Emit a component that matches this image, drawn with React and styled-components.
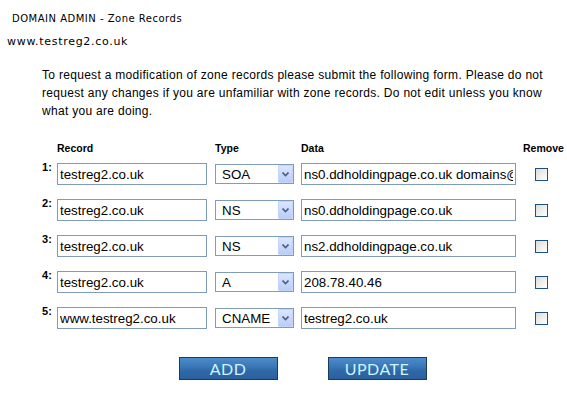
import React from "react";
import styled, { createGlobalStyle } from "styled-components";

const GlobalStyle = createGlobalStyle`
  body {
    margin: 0;
    background: #ffffff;
    color: #000000;
    font-family: "DejaVu Sans", Verdana, sans-serif;
  }
`;

const Page = styled.div`
  width: 567px;
  height: 414px;
  overflow: hidden;
`;

const Title = styled.div`
  padding: 12px 0 0 12px;
  font-size: 10px;
  line-height: 14px;
  letter-spacing: 0.5px;
`;

const Domain = styled.div`
  margin-top: 9px;
  padding-left: 7px;
  font-size: 11px;
  line-height: 14px;
  letter-spacing: 0.7px;
`;

const Intro = styled.p`
  margin: 17px 0 0 42px;
  width: 506px;
  font-family: "Liberation Sans", Arial, sans-serif;
  font-size: 12px;
  line-height: 18px;
  letter-spacing: 0.3px;
`;

const Form = styled.form`
  margin: 22px 0 0 42px;
  width: 521px;
  font-family: "Liberation Sans", Arial, sans-serif;
`;

const Row = styled.div`
  display: grid;
  grid-template-columns: 15px 158px 86px 222px 40px;
  align-items: center;
  height: ${(p) => (p.$header ? "13px" : "22px")};
  margin-bottom: ${(p) => (p.$header ? "8px" : "14px")};
`;

const Heading = styled.div`
  grid-column: ${(p) => p.$col};
  font-size: 10.5px;
  font-weight: bold;
  line-height: 13px;
`;

const Num = styled.div`
  align-self: start;
  margin-top: -1px;
  font-size: 11px;
  font-weight: bold;
  line-height: 11px;
`;

const TextBox = styled.input`
  box-sizing: border-box;
  width: ${(p) => p.$w}px;
  height: 22px;
  margin: 0;
  padding: 0 2px;
  border: 1px solid #7f9db9;
  background: #ffffff;
  font-family: "Liberation Sans", Arial, sans-serif;
  font-size: 13.33px;
  color: #000000;
  outline: none;
`;

const SelectWrap = styled.div`
  position: relative;
  width: 79px;
  height: 20px;
`;

const Select = styled.select`
  box-sizing: border-box;
  width: 100%;
  height: 100%;
  margin: 0;
  padding: 0 0 0 6px;
  border: 1px solid #7f9db9;
  border-radius: 0;
  background: #ffffff;
  appearance: none;
  font-family: "Liberation Sans", Arial, sans-serif;
  font-size: 13.33px;
  color: #000000;
  outline: none;
`;

const ArrowButton = styled.span`
  position: absolute;
  top: 1px;
  right: 1px;
  width: 15px;
  height: 18px;
  box-sizing: border-box;
  border: 1px solid #c3d3fd;
  border-radius: 1px;
  background: linear-gradient(#dbe6fe, #b9cdf7);
  display: flex;
  align-items: center;
  justify-content: center;
  pointer-events: none;
`;

const Check = styled.input`
  justify-self: start;
  margin: 0 0 0 12px;
  width: 13px;
  height: 13px;
  box-sizing: border-box;
  appearance: none;
  border: 1px solid #1c5180;
  background: linear-gradient(135deg, #dcdcd7, #ffffff);
`;

const Actions = styled.div`
  display: flex;
  justify-content: center;
  gap: 50px;
  margin-top: 28px;
`;

const BlueButton = styled.button`
  width: 99px;
  height: 23px;
  padding: 0;
  border: 1px solid #1b3a5e;
  background: linear-gradient(#4d8dcd 0%, #3a78b8 40%, #2f69a8 60%, #2b609e 100%);
  color: #cdf6ff;
  font-family: Lato, "Open Sans", sans-serif;
  font-weight: 400;
  font-size: 16px;
  line-height: 21px;
  letter-spacing: 0.5px;
`;

const records = [
  { name: "testreg2.co.uk", type: "SOA", data: "ns0.ddholdingpage.co.uk domains@ddholdingpage.co.uk 2009010101" },
  { name: "testreg2.co.uk", type: "NS", data: "ns0.ddholdingpage.co.uk" },
  { name: "testreg2.co.uk", type: "NS", data: "ns2.ddholdingpage.co.uk" },
  { name: "testreg2.co.uk", type: "A", data: "208.78.40.46" },
  { name: "www.testreg2.co.uk", type: "CNAME", data: "testreg2.co.uk" },
];

const types = ["SOA", "NS", "A", "CNAME", "MX", "TXT"];

const Chevron = () => (
  <svg width="7" height="5" viewBox="0 0 7 5">
    <path d="M0.5 0.5 L3.5 3.5 L6.5 0.5" fill="none" stroke="#4d6185" strokeWidth="1.6" />
  </svg>
);

const App = () => {
  return (
    <Page>
      <GlobalStyle />
      <Title>DOMAIN ADMIN - Zone Records</Title>
      <Domain>www.testreg2.co.uk</Domain>
      <Intro>
        To request a modification of zone records please submit the following form. Please do not
        request any changes if you are unfamiliar with zone records. Do not edit unless you know
        what you are doing.
      </Intro>
      <Form onSubmit={(e) => e.preventDefault()}>
        <Row $header>
          <Heading $col={2}>Record</Heading>
          <Heading $col={3}>Type</Heading>
          <Heading $col={4}>Data</Heading>
          <Heading $col={5}>Remove</Heading>
        </Row>
        {records.map((rec, index) => (
          <Row key={`record-${index}`}>
            <Num>{index + 1}:</Num>
            <TextBox $w={150} defaultValue={rec.name} />
            <SelectWrap>
              <Select defaultValue={rec.type}>
                {types.map((t) => <option key={t}>{t}</option>)}
              </Select>
              <ArrowButton><Chevron /></ArrowButton>
            </SelectWrap>
            <TextBox $w={215} defaultValue={rec.data} />
            <Check type="checkbox" />
          </Row>
        ))}
        <Actions>
          <BlueButton type="button">ADD</BlueButton>
          <BlueButton type="submit">UPDATE</BlueButton>
        </Actions>
      </Form>
    </Page>
  );
};

export default App;
